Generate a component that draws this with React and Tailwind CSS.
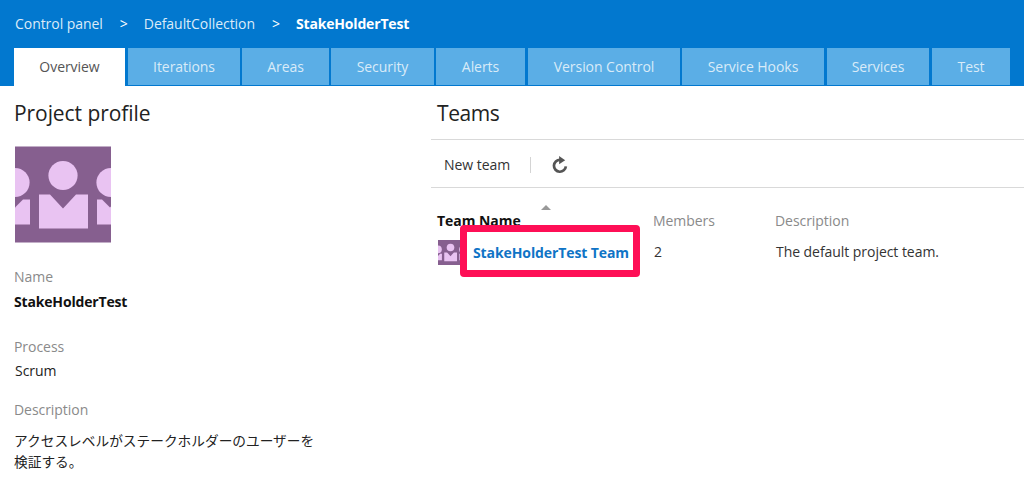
const FONT = "font-['Open_Sans','Noto_Sans_CJK_JP',sans-serif]";

function TeamIcon({ className }) {
  return (
    <svg viewBox="0 0 96 96" className={className}>
      <rect width="96" height="96" fill="#865f8f" />
      <g fill="#e9c3f2">
        <circle cx="48" cy="29" r="14.6" />
        <path d="M24 48h11l13 14 13-14h12v34H24z" />
        <circle cx="0" cy="36" r="14.6" />
        <path d="M0 61l8-8h7v25H0z" />
        <circle cx="96" cy="36" r="14.6" />
        <path d="M82 53h5l8 8 1-1v18H82z" />
      </g>
    </svg>
  );
}

const tabs = [
  ["Iterations", "ml-[3px] w-[112px]"],
  ["Areas", "ml-[2px] w-[87px]"],
  ["Security", "ml-[2px] w-[103px]"],
  ["Alerts", "ml-[2px] w-[89px]"],
  ["Version Control", "ml-[3px] w-[152px]"],
  ["Service Hooks", "ml-[2px] w-[142px]"],
  ["Services", "ml-[3px] w-[102px]"],
  ["Test", "ml-[3px] w-[78px]"],
];

export default function App() {
  return (
    <div className={`${FONT} relative h-[494px] w-[1024px] overflow-hidden bg-white text-[14px] tracking-[-0.05px] text-[#222]`}>
      <header className="h-[86px] bg-[#0278cf]">
        <nav className="flex h-[48px] items-center pb-[1px] pl-[15px] text-[#dcebf8]">
          <span>Control panel</span>
          <span className="ml-[17px] text-white">&gt;</span>
          <span className="ml-[16px]">DefaultCollection</span>
          <span className="ml-[17px] text-white">&gt;</span>
          <span className="ml-[16px] font-bold tracking-[-0.17px] text-white">StakeHolderTest</span>
        </nav>
        <div className="flex h-[38px] pl-[14px]">
          <div className="flex h-[38px] w-[111px] items-center justify-center bg-white pb-[1px] text-[#555]">Overview</div>
          {tabs.map(([t, w]) => (
            <div key={t} className={`flex h-[37px] ${w} items-center justify-center bg-[#5baee6] text-[#d9ebf8]`}>
              {t}
            </div>
          ))}
        </div>
      </header>
      <main className="flex">
        <section className="w-[431px] pl-[14px]">
          <h1 className="mt-[12px] text-[21px] leading-[30px] tracking-[-0.07px] text-[#222]">Project profile</h1>
          <TeamIcon className="ml-px mt-[18px] h-[97px] w-[96px]" />
          <div className="mt-[24px] leading-[20px] text-[#8a8a8a]">Name</div>
          <div className="mt-[5px] font-bold leading-[20px] tracking-[-0.17px] text-[#111]">StakeHolderTest</div>
          <div className="mt-[25px] leading-[20px] text-[#8a8a8a]">Process</div>
          <div className="mt-[4px] pl-px leading-[20px]">Scrum</div>
          <div className="mt-[19px] leading-[20px] text-[#8a8a8a]">Description</div>
          <p className="mt-[10px] w-[310px] text-[13.7px] leading-[21px] tracking-normal">アクセスレベルがステークホルダーのユーザーを検証する。</p>
        </section>
        <section className="flex-1">
          <h1 className="mt-[12px] pl-[6px] text-[21px] leading-[30px] tracking-[-0.4px] text-[#222]">Teams</h1>
          <div className="mt-[11px] flex h-[49px] items-center border-y border-[#d9d9d9] pl-[13px] pt-[2px]">
            <span className="text-[#333]">New team</span>
            <span className="ml-[20px] h-[16px] w-px bg-[#d4d4d4]" />
            <svg viewBox="0 0 16 16" className="ml-[20px] h-[18px] w-[18px]">
              <path d="M13.2 9.2A5.3 5.3 0 1 1 8 3.4" fill="none" stroke="#555" strokeWidth="2.4" />
              <path d="M7.2 0l5.4 3.7-5.4 3.7z" fill="#555" />
            </svg>
          </div>
          <div className="relative mt-[23px] grid grid-cols-[216px_122px_1fr] pl-[6px]">
            <span className="absolute left-[110px] top-[-6px] h-0 w-0 border-x-[5px] border-b-[5px] border-x-transparent border-b-[#999]" />
            <div className="font-bold leading-[20px] text-[#111]">Team Name</div>
            <div className="leading-[20px] text-[#8a8a8a]">Members</div>
            <div className="leading-[20px] text-[#8a8a8a]">Description</div>
            <div className="mt-[11px] flex h-[20px] items-center">
              <TeamIcon className="ml-px h-[25px] w-[25px] shrink-0" />
              <span className="ml-[10px] whitespace-nowrap font-bold tracking-[-0.1px] text-[#0f74c6]">StakeHolderTest Team</span>
            </div>
            <div className="mt-[11px] pl-[1px] leading-[20px] text-[#333]">2</div>
            <div className="mt-[11px] pl-[1px] leading-[20px] text-[#333]">The default project team.</div>
          </div>
        </section>
      </main>
      <div className="pointer-events-none absolute left-[460px] top-[225px] h-[52px] w-[180px] rounded-[4px] border-[7px] border-[#fe0f56]" />
    </div>
  );
}
